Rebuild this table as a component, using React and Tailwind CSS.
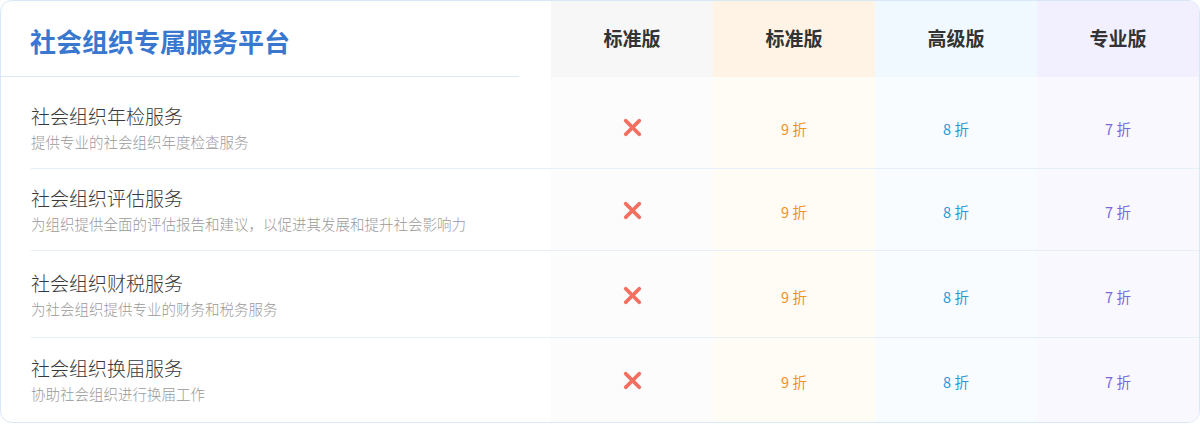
import { X } from 'lucide-react'

const services = [
  { title: '社会组织年检服务', desc: '提供专业的社会组织年度检查服务', row: 'h-[92px] border-b', pad: 'pt-[10px]' },
  { title: '社会组织评估服务', desc: '为组织提供全面的评估报告和建议，以促进其发展和提升社会影响力', row: 'h-[82px] border-b', pad: 'pt-[1px]' },
  { title: '社会组织财税服务', desc: '为社会组织提供专业的财务和税务服务', row: 'h-[87px] border-b', pad: 'pt-[2px]' },
  { title: '社会组织换届服务', desc: '协助社会组织进行换届工作', row: 'h-[84px]', pad: 'pt-0' },
]

const plans = [
  { name: '标准版', head: 'bg-[#f7f7f7]', body: 'bg-[#fcfcfd]' },
  { name: '标准版', head: 'bg-[#fff3e6]', body: 'bg-[#fffbf5]', text: 'text-[#f5901f]', value: '9 折' },
  { name: '高级版', head: 'bg-[#eff9ff]', body: 'bg-[#f8fcff]', text: 'text-[#2a98d8]', value: '8 折' },
  { name: '专业版', head: 'bg-[#f2f0ff]', body: 'bg-[#f9f8ff]', text: 'text-[#7a66e0]', value: '7 折' },
]

const App = () => {
  return (
    <div className="w-[1200px] h-[424px] bg-white" style={{ fontFamily: '"Noto Sans CJK SC", "Noto Sans", sans-serif' }}>
      <div className="h-[423px] border border-[#d9e8f8] rounded-[12px] overflow-hidden flex flex-col">
        {/* header */}
        <div className="flex h-[76px]">
          <div className="w-[550px] pr-[32px]">
            <div className="h-full border-b border-[#dce9f7] flex items-center pl-[29px] pt-[4px]">
              <h1 className="text-[26px] font-bold text-[#3a78d0] leading-none">社会组织专属服务平台</h1>
            </div>
          </div>
          {plans.map((p, i) => (
            <div key={i} className={`w-[162px] flex items-center justify-center text-[19px] font-bold text-[#333] pb-[1px] ${p.head}`}>
              {p.name}
            </div>
          ))}
        </div>

        {/* rows */}
        <div className="flex-1 flex">
          <div className="w-[30px] shrink-0" />
          <div className="flex-1 flex flex-col">
            {services.map((s, i) => (
              <div key={i} className={`flex border-[#e6eef7] ${s.row}`}>
                <div className={`w-[520px] bg-white flex flex-col justify-center ${s.pad}`}>
                  <div className="text-[19px] leading-[24px] text-[#3a3a3a] font-light">{s.title}</div>
                  <div className="text-[14.5px] leading-[20px] mt-[4px] text-[#9a9a9a] font-light">{s.desc}</div>
                </div>
                {plans.map((p, j) => (
                  <div key={j} className={`w-[162px] flex items-center justify-center ${s.pad} ${p.body}`}>
                    {j === 0 ? (
                      <X size={27} strokeWidth={3.4} className="text-[#f36f5f]" />
                    ) : (
                      <span className={`text-[14.5px] pt-[3px] ${p.text}`}>{p.value}</span>
                    )}
                  </div>
                ))}
              </div>
            ))}
          </div>
        </div>
      </div>
    </div>
  )
}

export default App
